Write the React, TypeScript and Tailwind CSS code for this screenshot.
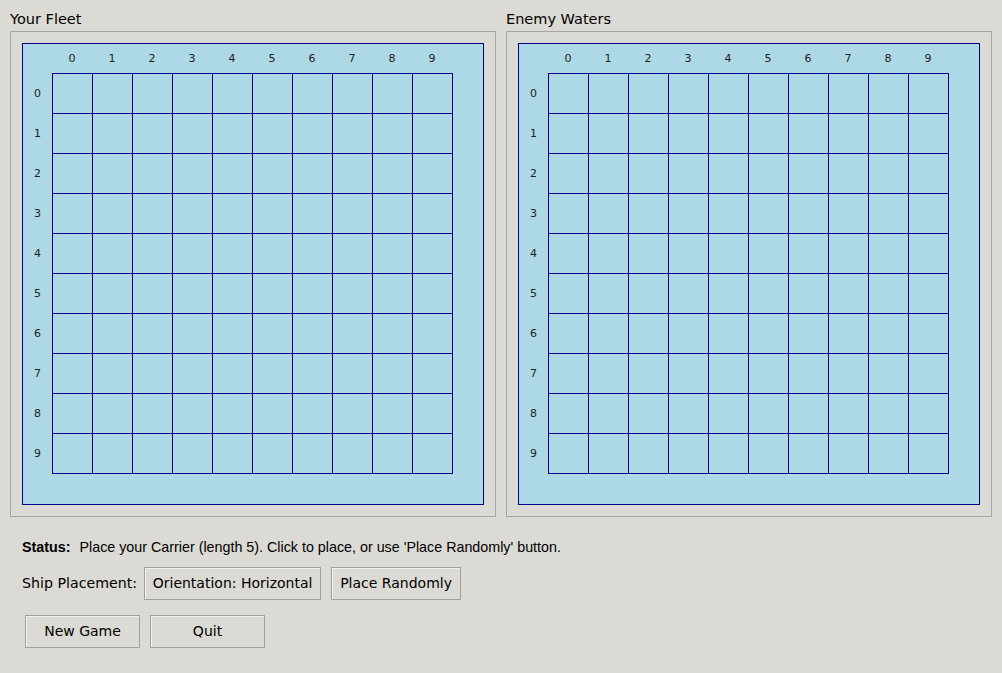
import React from "react";

const nums = [0, 1, 2, 3, 4, 5, 6, 7, 8, 9];

const Board = ({ title }: { title: string }) => {
  return (
    <div className="flex flex-col">
      <div className="h-[23px] text-[14.5px] leading-[23px] text-black font-['DejaVu_Sans',sans-serif]">
        {title}
      </div>
      <div className="w-[486px] h-[486px] border border-[#a8a59e] pt-[11px] pl-[11px]">
        <div className="w-[462px] h-[462px] border border-[#00008b] bg-[#add8e6] flex flex-col">
          <div className="flex h-[29px] pl-[29px] pt-[2px]">
            {nums.map((n) => (
              <div
                key={n}
                className="w-[40px] flex items-center justify-center text-[11px] text-[#222] font-['DejaVu_Sans',sans-serif]"
              >
                {n}
              </div>
            ))}
          </div>
          <div className="flex">
            <div className="w-[29px] flex flex-col pt-[1px]">
              {nums.map((n) => (
                <div
                  key={n}
                  className="h-[40px] flex items-center justify-center text-[11px] text-[#222] font-['DejaVu_Sans',sans-serif]"
                >
                  {n}
                </div>
              ))}
            </div>
            <div className="grid grid-cols-[repeat(10,39px)] gap-px p-px bg-[#00008b] w-[401px] h-[401px]">
              {Array.from({ length: 100 }).map((_, i) => (
                <div key={i} className="bg-[#add8e6] h-[39px]" />
              ))}
            </div>
          </div>
        </div>
      </div>
    </div>
  );
};

const Btn = ({ label, w }: { label: string; w: string }) => (
  <button
    className={`h-[33px] ${w} border border-[#a3a09a] bg-[#dcdad5] text-[14px] text-black font-['DejaVu_Sans',sans-serif] shadow-[inset_1px_1px_0_#f2f1ef]`}
  >
    {label}
  </button>
);

export default function App() {
  return (
    <div className="w-[1002px] h-[673px] bg-[#dcdad5] pl-[10px] pt-[8px]">
      <div className="flex gap-[10px]">
        <Board title="Your Fleet" />
        <Board title="Enemy Waters" />
      </div>
      <div className="pl-[12px] pt-[22px] text-[14.3px] leading-[17px] text-black font-['Liberation_Sans',sans-serif]">
        <span className="font-bold">Status:</span>
        <span className="ml-[9px]">
          Place your Carrier (length 5). Click to place, or use 'Place Randomly' button.
        </span>
      </div>
      <div className="flex items-center pl-[12px] mt-[11px]">
        <span className="text-[14.2px] text-black font-['DejaVu_Sans',sans-serif] mr-[7px]">
          Ship Placement:
        </span>
        <Btn label="Orientation: Horizontal" w="w-[177px]" />
        <Btn label="Place Randomly" w="w-[130px] ml-[10px]" />
      </div>
      <div className="flex pl-[15px] mt-[15px] gap-[10px]">
        <Btn label="New Game" w="w-[115px]" />
        <Btn label="Quit" w="w-[115px]" />
      </div>
    </div>
  );
}
